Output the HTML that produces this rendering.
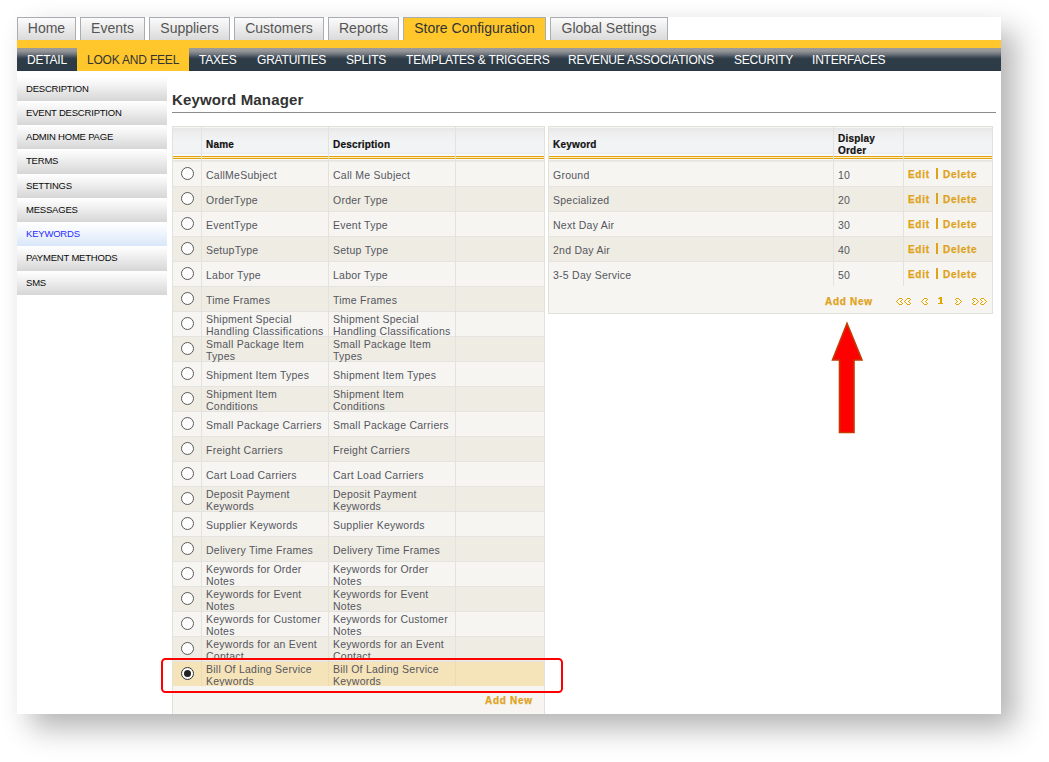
<!DOCTYPE html>
<html><head><meta charset="utf-8"><title>Keyword Manager</title>
<style>
*{box-sizing:border-box}
html,body{margin:0;padding:0;background:#fff;width:1049px;height:762px;overflow:hidden;font-family:"Liberation Sans",sans-serif}
#shadow{position:absolute;left:17px;top:17px;width:984px;height:697px;background:#fff;box-shadow:14px 14px 28px rgba(0,0,0,.3)}
#page{position:absolute;left:0;top:0;width:1049px;height:762px;clip-path:inset(17px 48px 48px 17px)}
.abs{position:absolute}
.tab{position:absolute;top:17px;height:23px;border:1px solid #a9adb2;border-bottom:none;background:linear-gradient(#fbfbfb,#dadada);color:#555;font-size:14px;line-height:21px;text-align:center;white-space:nowrap}
.tab.on{background:#ffc72c;color:#333}
#yband{position:absolute;left:17px;top:40px;width:984px;height:8px;background:#ffc72c}
#nav{position:absolute;left:17px;top:48px;width:984px;height:23px;background:linear-gradient(#9c9c9c 0px,#969696 3px,#6a717a 6.5px,#3c4853 9.5px,#2e3c48 11px,#2e3c48 22px,#243240 23px)}
.ni{position:absolute;top:48px;height:23px;font-size:12px;letter-spacing:-0.2px;line-height:24px;color:#fff;white-space:nowrap}
.ni.on{background:#ffc72c;color:#333}
.side{position:absolute;left:17px;width:150px;background:linear-gradient(#ffffff,#f4f4f4 30%,#d6d6d6);font-size:9.5px;letter-spacing:-0.2px;line-height:12px;color:#0a0a0a;padding-left:9px;white-space:nowrap}
.side.on{background:linear-gradient(#ffffff,#f6f9fe 30%,#d9e7fa);color:#2a2aff}
#title{position:absolute;left:172px;top:91px;font-size:15px;font-weight:bold;color:#333;white-space:nowrap;letter-spacing:0.15px}
#rule{position:absolute;left:172px;top:112px;width:824px;height:1px;background:#8c8c8c}
.tbl{position:absolute;background:#f6f5f1;border:1px solid #e2e1dc}
.hd{position:absolute;top:127px;height:28px;background:linear-gradient(#f6f5f1 0px,#f6f5f1 1px,#e7e7e7 1px,#eeeeef 6px,#f2f3f5 14px,#f2f3f5 25px,#e9eaec 27px,#f8f9fb 27px)}
.yl{position:absolute;height:1px;background:#e0a10a}
.yp{position:absolute;height:1px;background:#fff1c4}
.row{position:absolute;height:25px;border-bottom:1px solid #e4e3df}
.r0{background:#f6f5f1}.r1{background:#efede3}
.vl{position:absolute;width:1px;background:#e3e2de}
.tx{position:absolute;font-size:10.5px;letter-spacing:0.25px;line-height:12px;color:#555560;white-space:nowrap}
.th{position:absolute;font-size:10px;letter-spacing:0.2px;line-height:12px;font-weight:bold;color:#111;-webkit-text-stroke:0.2px #111;white-space:nowrap}
.lk{position:absolute;font-size:10px;letter-spacing:0.7px;line-height:14px;-webkit-text-stroke:0.25px #e0a21a;font-weight:bold;color:#e0a21a;white-space:nowrap}
.rad{position:absolute;left:181px;width:13px;height:13px;border-radius:50%;border:1px solid #5a5a5a;background:#fff}
</style></head><body>
<div id="shadow"></div>
<div id="page">

<div class="tab" style="left:17px;width:59px">Home</div>
<div class="tab" style="left:80px;width:65px">Events</div>
<div class="tab" style="left:149px;width:81px">Suppliers</div>
<div class="tab" style="left:234px;width:90px">Customers</div>
<div class="tab" style="left:328px;width:71px">Reports</div>
<div class="tab on" style="left:403px;width:143px">Store Configuration</div>
<div class="tab" style="left:550px;width:118px">Global Settings</div>
<div id="yband"></div><div id="nav"></div>
<div class="ni on" style="left:77px;width:112px"></div>
<div class="ni" style="left:27px;color:#fff">DETAIL</div>
<div class="ni" style="left:87px;color:#333">LOOK AND FEEL</div>
<div class="ni" style="left:199px;color:#fff">TAXES</div>
<div class="ni" style="left:257px;color:#fff">GRATUITIES</div>
<div class="ni" style="left:346px;color:#fff">SPLITS</div>
<div class="ni" style="left:406px;color:#fff">TEMPLATES &amp; TRIGGERS</div>
<div class="ni" style="left:568px;color:#fff">REVENUE ASSOCIATIONS</div>
<div class="ni" style="left:734px;color:#fff">SECURITY</div>
<div class="ni" style="left:812px;color:#fff">INTERFACES</div>
<div class="side" style="top:77px;height:24px;padding-top:6px">DESCRIPTION</div>
<div class="side" style="top:101px;height:24px;padding-top:6px">EVENT DESCRIPTION</div>
<div class="side" style="top:125px;height:24px;padding-top:6px">ADMIN HOME PAGE</div>
<div class="side" style="top:149px;height:25px;padding-top:6px">TERMS</div>
<div class="side" style="top:174px;height:24px;padding-top:6px">SETTINGS</div>
<div class="side" style="top:198px;height:24px;padding-top:6px">MESSAGES</div>
<div class="side on" style="top:222px;height:24px;padding-top:6px">KEYWORDS</div>
<div class="side" style="top:246px;height:25px;padding-top:6px">PAYMENT METHODS</div>
<div class="side" style="top:271px;height:24px;padding-top:6px">SMS</div>
<div id="title">Keyword Manager</div><div id="rule"></div>
<div class="tbl" style="left:172px;top:126px;width:373px;height:635px"></div>
<div class="hd" style="left:173px;width:28px"></div>
<div class="abs" style="left:173px;top:155px;width:28px;height:5px;background:#f7f8fa"></div>
<div class="yl" style="left:173px;top:156px;width:28px"></div>
<div class="yp" style="left:173px;top:157px;width:28px"></div>
<div class="yl" style="left:173px;top:158px;width:28px"></div>
<div class="hd" style="left:202px;width:126px"></div>
<div class="abs" style="left:202px;top:155px;width:126px;height:5px;background:#f7f8fa"></div>
<div class="yl" style="left:202px;top:156px;width:126px"></div>
<div class="yp" style="left:202px;top:157px;width:126px"></div>
<div class="yl" style="left:202px;top:158px;width:126px"></div>
<div class="hd" style="left:329px;width:126px"></div>
<div class="abs" style="left:329px;top:155px;width:126px;height:5px;background:#f7f8fa"></div>
<div class="yl" style="left:329px;top:156px;width:126px"></div>
<div class="yp" style="left:329px;top:157px;width:126px"></div>
<div class="yl" style="left:329px;top:158px;width:126px"></div>
<div class="hd" style="left:456px;width:88px"></div>
<div class="abs" style="left:456px;top:155px;width:88px;height:5px;background:#f7f8fa"></div>
<div class="yl" style="left:456px;top:156px;width:88px"></div>
<div class="yp" style="left:456px;top:157px;width:88px"></div>
<div class="yl" style="left:456px;top:158px;width:88px"></div>
<div class="abs" style="left:173px;top:160px;width:371px;height:1px;background:#e5e4e0"></div>
<div class="row r0" style="left:173px;top:161px;width:371px;height:26px;background:linear-gradient(#ebeae6 0px,#ebeae6 1px,#f6f5f1 1px)"></div>
<div class="row r1" style="left:173px;top:187px;width:371px;height:25px"></div>
<div class="row r0" style="left:173px;top:212px;width:371px;height:25px"></div>
<div class="row r1" style="left:173px;top:237px;width:371px;height:25px"></div>
<div class="row r0" style="left:173px;top:262px;width:371px;height:25px"></div>
<div class="row r1" style="left:173px;top:287px;width:371px;height:25px"></div>
<div class="row r0" style="left:173px;top:312px;width:371px;height:25px"></div>
<div class="row r1" style="left:173px;top:337px;width:371px;height:25px"></div>
<div class="row r0" style="left:173px;top:362px;width:371px;height:25px"></div>
<div class="row r1" style="left:173px;top:387px;width:371px;height:25px"></div>
<div class="row r0" style="left:173px;top:412px;width:371px;height:25px"></div>
<div class="row r1" style="left:173px;top:437px;width:371px;height:25px"></div>
<div class="row r0" style="left:173px;top:462px;width:371px;height:25px"></div>
<div class="row r1" style="left:173px;top:487px;width:371px;height:25px"></div>
<div class="row r0" style="left:173px;top:512px;width:371px;height:25px"></div>
<div class="row r1" style="left:173px;top:537px;width:371px;height:25px"></div>
<div class="row r0" style="left:173px;top:562px;width:371px;height:25px"></div>
<div class="row r1" style="left:173px;top:587px;width:371px;height:25px"></div>
<div class="row r0" style="left:173px;top:612px;width:371px;height:25px"></div>
<div class="row r1" style="left:173px;top:637px;width:371px;height:25px"></div>
<div class="row r0" style="left:173px;top:662px;width:371px;height:25px"></div>
<div class="vl" style="left:201px;top:127px;height:559px"></div>
<div class="vl" style="left:328px;top:127px;height:559px"></div>
<div class="vl" style="left:455px;top:127px;height:559px"></div>
<div class="th" style="left:206px;top:139px">Name</div>
<div class="th" style="left:333px;top:139px">Description</div>
<div class="rad" style="top:167px"></div>
<div class="tx" style="left:206px;top:169px">CallMeSubject</div>
<div class="tx" style="left:333px;top:169px">Call Me Subject</div>
<div class="rad" style="top:192px"></div>
<div class="tx" style="left:206px;top:194px">OrderType</div>
<div class="tx" style="left:333px;top:194px">Order Type</div>
<div class="rad" style="top:217px"></div>
<div class="tx" style="left:206px;top:219px">EventType</div>
<div class="tx" style="left:333px;top:219px">Event Type</div>
<div class="rad" style="top:242px"></div>
<div class="tx" style="left:206px;top:244px">SetupType</div>
<div class="tx" style="left:333px;top:244px">Setup Type</div>
<div class="rad" style="top:267px"></div>
<div class="tx" style="left:206px;top:269px">Labor Type</div>
<div class="tx" style="left:333px;top:269px">Labor Type</div>
<div class="rad" style="top:292px"></div>
<div class="tx" style="left:206px;top:294px">Time Frames</div>
<div class="tx" style="left:333px;top:294px">Time Frames</div>
<div class="rad" style="top:317px"></div>
<div class="tx" style="left:206px;top:313px">Shipment Special<br>Handling Classifications</div>
<div class="tx" style="left:333px;top:313px">Shipment Special<br>Handling Classifications</div>
<div class="rad" style="top:342px"></div>
<div class="tx" style="left:206px;top:338px">Small Package Item<br>Types</div>
<div class="tx" style="left:333px;top:338px">Small Package Item<br>Types</div>
<div class="rad" style="top:367px"></div>
<div class="tx" style="left:206px;top:369px">Shipment Item Types</div>
<div class="tx" style="left:333px;top:369px">Shipment Item Types</div>
<div class="rad" style="top:392px"></div>
<div class="tx" style="left:206px;top:388px">Shipment Item<br>Conditions</div>
<div class="tx" style="left:333px;top:388px">Shipment Item<br>Conditions</div>
<div class="rad" style="top:417px"></div>
<div class="tx" style="left:206px;top:419px">Small Package Carriers</div>
<div class="tx" style="left:333px;top:419px">Small Package Carriers</div>
<div class="rad" style="top:442px"></div>
<div class="tx" style="left:206px;top:444px">Freight Carriers</div>
<div class="tx" style="left:333px;top:444px">Freight Carriers</div>
<div class="rad" style="top:467px"></div>
<div class="tx" style="left:206px;top:469px">Cart Load Carriers</div>
<div class="tx" style="left:333px;top:469px">Cart Load Carriers</div>
<div class="rad" style="top:492px"></div>
<div class="tx" style="left:206px;top:488px">Deposit Payment<br>Keywords</div>
<div class="tx" style="left:333px;top:488px">Deposit Payment<br>Keywords</div>
<div class="rad" style="top:517px"></div>
<div class="tx" style="left:206px;top:519px">Supplier Keywords</div>
<div class="tx" style="left:333px;top:519px">Supplier Keywords</div>
<div class="rad" style="top:542px"></div>
<div class="tx" style="left:206px;top:544px">Delivery Time Frames</div>
<div class="tx" style="left:333px;top:544px">Delivery Time Frames</div>
<div class="rad" style="top:567px"></div>
<div class="tx" style="left:206px;top:563px">Keywords for Order<br>Notes</div>
<div class="tx" style="left:333px;top:563px">Keywords for Order<br>Notes</div>
<div class="rad" style="top:592px"></div>
<div class="tx" style="left:206px;top:588px">Keywords for Event<br>Notes</div>
<div class="tx" style="left:333px;top:588px">Keywords for Event<br>Notes</div>
<div class="rad" style="top:617px"></div>
<div class="tx" style="left:206px;top:613px">Keywords for Customer<br>Notes</div>
<div class="tx" style="left:333px;top:613px">Keywords for Customer<br>Notes</div>
<div class="rad" style="top:642px"></div>
<div class="tx" style="left:206px;top:638px">Keywords for an Event<br>Contact</div>
<div class="tx" style="left:333px;top:638px">Keywords for an Event<br>Contact</div>
<div class="abs" style="left:173px;top:662px;width:371px;height:24px;background:#f5e4b9"></div>
<div class="vl" style="left:201px;top:661px;height:25px;background:#eadcb6"></div>
<div class="vl" style="left:328px;top:661px;height:25px;background:#eadcb6"></div>
<div class="vl" style="left:455px;top:661px;height:25px;background:#eadcb6"></div>
<div class="rad" style="top:667px;border-color:#333"></div><div class="abs" style="left:184px;top:670px;width:7px;height:7px;border-radius:50%;background:#222"></div>
<div class="tx" style="left:206px;top:663px">Bill Of Lading Service<br>Keywords</div>
<div class="tx" style="left:333px;top:663px">Bill Of Lading Service<br>Keywords</div>
<div class="abs" style="left:173px;top:686px;width:371px;height:30px;background:#f6f5f1"></div>
<div class="lk" style="left:485px;top:694px">Add New</div>
<div class="tbl" style="left:548px;top:126px;width:445px;height:188px"></div>
<div class="hd" style="left:549px;width:284px"></div>
<div class="abs" style="left:549px;top:155px;width:284px;height:5px;background:#f7f8fa"></div>
<div class="yl" style="left:549px;top:156px;width:284px"></div>
<div class="yp" style="left:549px;top:157px;width:284px"></div>
<div class="yl" style="left:549px;top:158px;width:284px"></div>
<div class="hd" style="left:834px;width:69px"></div>
<div class="abs" style="left:834px;top:155px;width:69px;height:5px;background:#f7f8fa"></div>
<div class="yl" style="left:834px;top:156px;width:69px"></div>
<div class="yp" style="left:834px;top:157px;width:69px"></div>
<div class="yl" style="left:834px;top:158px;width:69px"></div>
<div class="hd" style="left:904px;width:88px"></div>
<div class="abs" style="left:904px;top:155px;width:88px;height:5px;background:#f7f8fa"></div>
<div class="yl" style="left:904px;top:156px;width:88px"></div>
<div class="yp" style="left:904px;top:157px;width:88px"></div>
<div class="yl" style="left:904px;top:158px;width:88px"></div>
<div class="abs" style="left:549px;top:160px;width:443px;height:1px;background:#e5e4e0"></div>
<div class="row r0" style="left:549px;top:161px;width:443px;height:26px;background:linear-gradient(#ebeae6 0px,#ebeae6 1px,#f6f5f1 1px)"></div>
<div class="row r1" style="left:549px;top:187px;width:443px;height:25px"></div>
<div class="row r0" style="left:549px;top:212px;width:443px;height:25px"></div>
<div class="row r1" style="left:549px;top:237px;width:443px;height:25px"></div>
<div class="row r0" style="left:549px;top:262px;width:443px;height:25px"></div>
<div class="vl" style="left:833px;top:127px;height:159px"></div>
<div class="vl" style="left:903px;top:127px;height:159px"></div>
<div class="abs" style="left:549px;top:286px;width:443px;height:27px;background:#f6f5f1"></div>
<div class="th" style="left:553px;top:139px">Keyword</div>
<div class="th" style="left:838px;top:133px">Display<br>Order</div>
<div class="tx" style="left:553px;top:169px">Ground</div>
<div class="tx" style="left:838px;top:169px">10</div>
<div class="lk" style="left:908px;top:168px">Edit</div>
<div class="abs" style="left:936px;top:168px;width:2px;height:11px;background:#e0a21a"></div>
<div class="lk" style="left:943px;top:168px">Delete</div>
<div class="tx" style="left:553px;top:194px">Specialized</div>
<div class="tx" style="left:838px;top:194px">20</div>
<div class="lk" style="left:908px;top:193px">Edit</div>
<div class="abs" style="left:936px;top:193px;width:2px;height:11px;background:#e0a21a"></div>
<div class="lk" style="left:943px;top:193px">Delete</div>
<div class="tx" style="left:553px;top:219px">Next Day Air</div>
<div class="tx" style="left:838px;top:219px">30</div>
<div class="lk" style="left:908px;top:218px">Edit</div>
<div class="abs" style="left:936px;top:218px;width:2px;height:11px;background:#e0a21a"></div>
<div class="lk" style="left:943px;top:218px">Delete</div>
<div class="tx" style="left:553px;top:244px">2nd Day Air</div>
<div class="tx" style="left:838px;top:244px">40</div>
<div class="lk" style="left:908px;top:243px">Edit</div>
<div class="abs" style="left:936px;top:243px;width:2px;height:11px;background:#e0a21a"></div>
<div class="lk" style="left:943px;top:243px">Delete</div>
<div class="tx" style="left:553px;top:269px">3-5 Day Service</div>
<div class="tx" style="left:838px;top:269px">50</div>
<div class="lk" style="left:908px;top:268px">Edit</div>
<div class="abs" style="left:936px;top:268px;width:2px;height:11px;background:#e0a21a"></div>
<div class="lk" style="left:943px;top:268px">Delete</div>
<div class="lk" style="left:825px;top:295px">Add New</div>
<svg class="abs" style="left:0;top:0" width="1049" height="762" shape-rendering="crispEdges">
<rect x="899" y="299" width="1" height="1" fill="#fdfbf2"/><rect x="900" y="299" width="1" height="1" fill="#fdfbf2"/><rect x="901" y="299" width="1" height="1" fill="#fdfbf2"/><rect x="898" y="300" width="1" height="1" fill="#fdfbf2"/><rect x="899" y="300" width="1" height="1" fill="#fdfbf2"/><rect x="900" y="300" width="1" height="1" fill="#fdfbf2"/><rect x="897" y="301" width="1" height="1" fill="#fdfbf2"/><rect x="898" y="301" width="1" height="1" fill="#fdfbf2"/><rect x="899" y="301" width="1" height="1" fill="#fdfbf2"/><rect x="898" y="302" width="1" height="1" fill="#fdfbf2"/><rect x="899" y="302" width="1" height="1" fill="#fdfbf2"/><rect x="900" y="302" width="1" height="1" fill="#fdfbf2"/><rect x="899" y="303" width="1" height="1" fill="#fdfbf2"/><rect x="900" y="303" width="1" height="1" fill="#fdfbf2"/><rect x="901" y="303" width="1" height="1" fill="#fdfbf2"/><rect x="899" y="298" width="1" height="1" fill="#e3a300"/><rect x="900" y="298" width="1" height="1" fill="#e3a300"/><rect x="901" y="298" width="1" height="1" fill="#e3a300"/><rect x="898" y="299" width="1" height="1" fill="#e3a300"/><rect x="902" y="299" width="1" height="1" fill="#e3a300"/><rect x="897" y="300" width="1" height="1" fill="#e3a300"/><rect x="901" y="300" width="1" height="1" fill="#e3a300"/><rect x="896" y="301" width="1" height="1" fill="#e3a300"/><rect x="900" y="301" width="1" height="1" fill="#e3a300"/><rect x="897" y="302" width="1" height="1" fill="#e3a300"/><rect x="901" y="302" width="1" height="1" fill="#e3a300"/><rect x="898" y="303" width="1" height="1" fill="#e3a300"/><rect x="902" y="303" width="1" height="1" fill="#e3a300"/><rect x="899" y="304" width="1" height="1" fill="#e3a300"/><rect x="900" y="304" width="1" height="1" fill="#e3a300"/><rect x="901" y="304" width="1" height="1" fill="#e3a300"/>
<rect x="907" y="299" width="1" height="1" fill="#fdfbf2"/><rect x="908" y="299" width="1" height="1" fill="#fdfbf2"/><rect x="909" y="299" width="1" height="1" fill="#fdfbf2"/><rect x="906" y="300" width="1" height="1" fill="#fdfbf2"/><rect x="907" y="300" width="1" height="1" fill="#fdfbf2"/><rect x="908" y="300" width="1" height="1" fill="#fdfbf2"/><rect x="905" y="301" width="1" height="1" fill="#fdfbf2"/><rect x="906" y="301" width="1" height="1" fill="#fdfbf2"/><rect x="907" y="301" width="1" height="1" fill="#fdfbf2"/><rect x="906" y="302" width="1" height="1" fill="#fdfbf2"/><rect x="907" y="302" width="1" height="1" fill="#fdfbf2"/><rect x="908" y="302" width="1" height="1" fill="#fdfbf2"/><rect x="907" y="303" width="1" height="1" fill="#fdfbf2"/><rect x="908" y="303" width="1" height="1" fill="#fdfbf2"/><rect x="909" y="303" width="1" height="1" fill="#fdfbf2"/><rect x="907" y="298" width="1" height="1" fill="#e3a300"/><rect x="908" y="298" width="1" height="1" fill="#e3a300"/><rect x="909" y="298" width="1" height="1" fill="#e3a300"/><rect x="906" y="299" width="1" height="1" fill="#e3a300"/><rect x="910" y="299" width="1" height="1" fill="#e3a300"/><rect x="905" y="300" width="1" height="1" fill="#e3a300"/><rect x="909" y="300" width="1" height="1" fill="#e3a300"/><rect x="904" y="301" width="1" height="1" fill="#e3a300"/><rect x="908" y="301" width="1" height="1" fill="#e3a300"/><rect x="905" y="302" width="1" height="1" fill="#e3a300"/><rect x="909" y="302" width="1" height="1" fill="#e3a300"/><rect x="906" y="303" width="1" height="1" fill="#e3a300"/><rect x="910" y="303" width="1" height="1" fill="#e3a300"/><rect x="907" y="304" width="1" height="1" fill="#e3a300"/><rect x="908" y="304" width="1" height="1" fill="#e3a300"/><rect x="909" y="304" width="1" height="1" fill="#e3a300"/>
<rect x="924" y="299" width="1" height="1" fill="#fdfbf2"/><rect x="925" y="299" width="1" height="1" fill="#fdfbf2"/><rect x="926" y="299" width="1" height="1" fill="#fdfbf2"/><rect x="923" y="300" width="1" height="1" fill="#fdfbf2"/><rect x="924" y="300" width="1" height="1" fill="#fdfbf2"/><rect x="925" y="300" width="1" height="1" fill="#fdfbf2"/><rect x="922" y="301" width="1" height="1" fill="#fdfbf2"/><rect x="923" y="301" width="1" height="1" fill="#fdfbf2"/><rect x="924" y="301" width="1" height="1" fill="#fdfbf2"/><rect x="923" y="302" width="1" height="1" fill="#fdfbf2"/><rect x="924" y="302" width="1" height="1" fill="#fdfbf2"/><rect x="925" y="302" width="1" height="1" fill="#fdfbf2"/><rect x="924" y="303" width="1" height="1" fill="#fdfbf2"/><rect x="925" y="303" width="1" height="1" fill="#fdfbf2"/><rect x="926" y="303" width="1" height="1" fill="#fdfbf2"/><rect x="924" y="298" width="1" height="1" fill="#e3a300"/><rect x="925" y="298" width="1" height="1" fill="#e3a300"/><rect x="926" y="298" width="1" height="1" fill="#e3a300"/><rect x="923" y="299" width="1" height="1" fill="#e3a300"/><rect x="927" y="299" width="1" height="1" fill="#e3a300"/><rect x="922" y="300" width="1" height="1" fill="#e3a300"/><rect x="926" y="300" width="1" height="1" fill="#e3a300"/><rect x="921" y="301" width="1" height="1" fill="#e3a300"/><rect x="925" y="301" width="1" height="1" fill="#e3a300"/><rect x="922" y="302" width="1" height="1" fill="#e3a300"/><rect x="926" y="302" width="1" height="1" fill="#e3a300"/><rect x="923" y="303" width="1" height="1" fill="#e3a300"/><rect x="927" y="303" width="1" height="1" fill="#e3a300"/><rect x="924" y="304" width="1" height="1" fill="#e3a300"/><rect x="925" y="304" width="1" height="1" fill="#e3a300"/><rect x="926" y="304" width="1" height="1" fill="#e3a300"/>
<rect x="958" y="299" width="1" height="1" fill="#fdfbf2"/><rect x="957" y="299" width="1" height="1" fill="#fdfbf2"/><rect x="956" y="299" width="1" height="1" fill="#fdfbf2"/><rect x="959" y="300" width="1" height="1" fill="#fdfbf2"/><rect x="958" y="300" width="1" height="1" fill="#fdfbf2"/><rect x="957" y="300" width="1" height="1" fill="#fdfbf2"/><rect x="960" y="301" width="1" height="1" fill="#fdfbf2"/><rect x="959" y="301" width="1" height="1" fill="#fdfbf2"/><rect x="958" y="301" width="1" height="1" fill="#fdfbf2"/><rect x="959" y="302" width="1" height="1" fill="#fdfbf2"/><rect x="958" y="302" width="1" height="1" fill="#fdfbf2"/><rect x="957" y="302" width="1" height="1" fill="#fdfbf2"/><rect x="958" y="303" width="1" height="1" fill="#fdfbf2"/><rect x="957" y="303" width="1" height="1" fill="#fdfbf2"/><rect x="956" y="303" width="1" height="1" fill="#fdfbf2"/><rect x="958" y="298" width="1" height="1" fill="#e3a300"/><rect x="957" y="298" width="1" height="1" fill="#e3a300"/><rect x="956" y="298" width="1" height="1" fill="#e3a300"/><rect x="959" y="299" width="1" height="1" fill="#e3a300"/><rect x="955" y="299" width="1" height="1" fill="#e3a300"/><rect x="960" y="300" width="1" height="1" fill="#e3a300"/><rect x="956" y="300" width="1" height="1" fill="#e3a300"/><rect x="961" y="301" width="1" height="1" fill="#e3a300"/><rect x="957" y="301" width="1" height="1" fill="#e3a300"/><rect x="960" y="302" width="1" height="1" fill="#e3a300"/><rect x="956" y="302" width="1" height="1" fill="#e3a300"/><rect x="959" y="303" width="1" height="1" fill="#e3a300"/><rect x="955" y="303" width="1" height="1" fill="#e3a300"/><rect x="958" y="304" width="1" height="1" fill="#e3a300"/><rect x="957" y="304" width="1" height="1" fill="#e3a300"/><rect x="956" y="304" width="1" height="1" fill="#e3a300"/>
<rect x="975" y="299" width="1" height="1" fill="#fdfbf2"/><rect x="974" y="299" width="1" height="1" fill="#fdfbf2"/><rect x="973" y="299" width="1" height="1" fill="#fdfbf2"/><rect x="976" y="300" width="1" height="1" fill="#fdfbf2"/><rect x="975" y="300" width="1" height="1" fill="#fdfbf2"/><rect x="974" y="300" width="1" height="1" fill="#fdfbf2"/><rect x="977" y="301" width="1" height="1" fill="#fdfbf2"/><rect x="976" y="301" width="1" height="1" fill="#fdfbf2"/><rect x="975" y="301" width="1" height="1" fill="#fdfbf2"/><rect x="976" y="302" width="1" height="1" fill="#fdfbf2"/><rect x="975" y="302" width="1" height="1" fill="#fdfbf2"/><rect x="974" y="302" width="1" height="1" fill="#fdfbf2"/><rect x="975" y="303" width="1" height="1" fill="#fdfbf2"/><rect x="974" y="303" width="1" height="1" fill="#fdfbf2"/><rect x="973" y="303" width="1" height="1" fill="#fdfbf2"/><rect x="975" y="298" width="1" height="1" fill="#e3a300"/><rect x="974" y="298" width="1" height="1" fill="#e3a300"/><rect x="973" y="298" width="1" height="1" fill="#e3a300"/><rect x="976" y="299" width="1" height="1" fill="#e3a300"/><rect x="972" y="299" width="1" height="1" fill="#e3a300"/><rect x="977" y="300" width="1" height="1" fill="#e3a300"/><rect x="973" y="300" width="1" height="1" fill="#e3a300"/><rect x="978" y="301" width="1" height="1" fill="#e3a300"/><rect x="974" y="301" width="1" height="1" fill="#e3a300"/><rect x="977" y="302" width="1" height="1" fill="#e3a300"/><rect x="973" y="302" width="1" height="1" fill="#e3a300"/><rect x="976" y="303" width="1" height="1" fill="#e3a300"/><rect x="972" y="303" width="1" height="1" fill="#e3a300"/><rect x="975" y="304" width="1" height="1" fill="#e3a300"/><rect x="974" y="304" width="1" height="1" fill="#e3a300"/><rect x="973" y="304" width="1" height="1" fill="#e3a300"/>
<rect x="983" y="299" width="1" height="1" fill="#fdfbf2"/><rect x="982" y="299" width="1" height="1" fill="#fdfbf2"/><rect x="981" y="299" width="1" height="1" fill="#fdfbf2"/><rect x="984" y="300" width="1" height="1" fill="#fdfbf2"/><rect x="983" y="300" width="1" height="1" fill="#fdfbf2"/><rect x="982" y="300" width="1" height="1" fill="#fdfbf2"/><rect x="985" y="301" width="1" height="1" fill="#fdfbf2"/><rect x="984" y="301" width="1" height="1" fill="#fdfbf2"/><rect x="983" y="301" width="1" height="1" fill="#fdfbf2"/><rect x="984" y="302" width="1" height="1" fill="#fdfbf2"/><rect x="983" y="302" width="1" height="1" fill="#fdfbf2"/><rect x="982" y="302" width="1" height="1" fill="#fdfbf2"/><rect x="983" y="303" width="1" height="1" fill="#fdfbf2"/><rect x="982" y="303" width="1" height="1" fill="#fdfbf2"/><rect x="981" y="303" width="1" height="1" fill="#fdfbf2"/><rect x="983" y="298" width="1" height="1" fill="#e3a300"/><rect x="982" y="298" width="1" height="1" fill="#e3a300"/><rect x="981" y="298" width="1" height="1" fill="#e3a300"/><rect x="984" y="299" width="1" height="1" fill="#e3a300"/><rect x="980" y="299" width="1" height="1" fill="#e3a300"/><rect x="985" y="300" width="1" height="1" fill="#e3a300"/><rect x="981" y="300" width="1" height="1" fill="#e3a300"/><rect x="986" y="301" width="1" height="1" fill="#e3a300"/><rect x="982" y="301" width="1" height="1" fill="#e3a300"/><rect x="985" y="302" width="1" height="1" fill="#e3a300"/><rect x="981" y="302" width="1" height="1" fill="#e3a300"/><rect x="984" y="303" width="1" height="1" fill="#e3a300"/><rect x="980" y="303" width="1" height="1" fill="#e3a300"/><rect x="983" y="304" width="1" height="1" fill="#e3a300"/><rect x="982" y="304" width="1" height="1" fill="#e3a300"/><rect x="981" y="304" width="1" height="1" fill="#e3a300"/>
<rect x="940" y="297" width="2" height="7" fill="#e3a300"/><rect x="938" y="298" width="2" height="1" fill="#e3a300"/><rect x="939" y="297" width="1" height="1" fill="#eec060"/><rect x="938" y="303" width="5" height="1" fill="#e3a300"/>
<rect x="162" y="659" width="400" height="33" rx="3.5" ry="3.5" fill="none" stroke="#ff0000" stroke-width="2" shape-rendering="auto"/>
<polygon shape-rendering="auto" points="847,323.5 832.5,360 839.5,360 839.5,432.5 854,432.5 854,360 862,360" fill="#ff0000" stroke="#c43a00" stroke-width="1.6"/>
</svg>
</div></body></html>
